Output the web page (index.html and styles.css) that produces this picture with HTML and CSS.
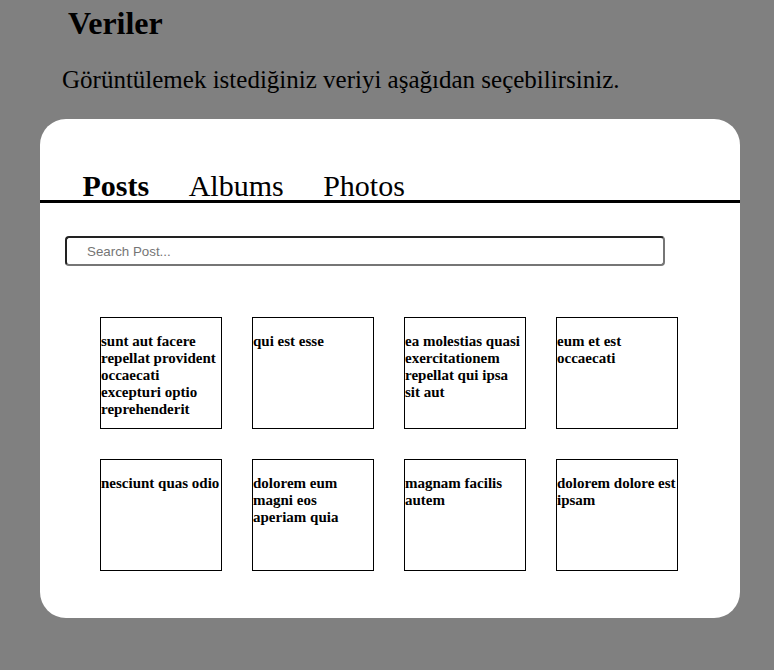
FILE: index.html
```html
<!DOCTYPE html>
<html lang="tr">
<head>
<meta charset="utf-8">
<title>Veriler</title>
<link rel="stylesheet" href="styles.css">
</head>
<body>
<header class="intro">
  <h1 class="title">Veriler</h1>
  <p class="lead">Görüntülemek istediğiniz veriyi aşağıdan seçebilirsiniz.</p>
</header>
<main class="panel">
  <nav class="tabs">
    <span class="tab active">Posts</span>
    <span class="tab">Albums</span>
    <span class="tab">Photos</span>
  </nav>
  <div class="search-wrap">
    <input class="search" type="text" placeholder="Search Post...">
  </div>
  <section class="grid">
    <div class="item"><h4 class="item-title">sunt aut facere repellat provident occaecati excepturi optio reprehenderit</h4></div>
    <div class="item"><h4 class="item-title">qui est esse</h4></div>
    <div class="item"><h4 class="item-title">ea molestias quasi exercitationem repellat qui ipsa sit aut</h4></div>
    <div class="item"><h4 class="item-title">eum et est occaecati</h4></div>
    <div class="item"><h4 class="item-title">nesciunt quas odio</h4></div>
    <div class="item"><h4 class="item-title">dolorem eum magni eos aperiam quia</h4></div>
    <div class="item"><h4 class="item-title">magnam facilis autem</h4></div>
    <div class="item"><h4 class="item-title">dolorem dolore est ipsam</h4></div>
  </section>
</main>
</body>
</html>
```

FILE: styles.css
```css
html, body {
  margin: 0;
  padding: 0;
}
body {
  background: #808080;
  font-family: "Liberation Serif", "Times New Roman", serif;
  color: #000;
  min-height: 670px;
}
.intro {
  padding-top: 5px;
}
.title {
  margin: 0 0 0 68px;
  font-size: 32px;
  font-weight: bold;
  line-height: 37px;
}
.lead {
  margin: 23px 0 0 62px;
  font-size: 25px;
  line-height: 29px;
}
.panel {
  margin: 25px 0 0 40px;
  width: 700px;
  height: 499px;
  box-sizing: border-box;
  background: #fff;
  border-radius: 26px;
  padding-top: 49px;
}
.tabs {
  display: flex;
  gap: 39.5px;
  padding-left: 42.5px;
  border-bottom: 3px solid #000;
  height: 32px;
  align-items: flex-end;
}
.tab {
  font-size: 30px;
  line-height: 28px;
}
.tab.active {
  font-weight: bold;
}
.search-wrap {
  padding: 33px 0 0 25px;
}
.search {
  display: block;
  width: 600px;
  height: 30px;
  box-sizing: border-box;
  border: 2px solid;
  border-color: #222 #767676 #767676 #222;
  border-radius: 4px;
  padding: 0 0 0 20px;
  font-family: "Liberation Sans", Arial, sans-serif;
  font-size: 13.33px;
  color: #000;
  outline: none;
}
.search::placeholder {
  color: #757575;
}
.grid {
  display: grid;
  grid-template-columns: repeat(4, 122px);
  gap: 30px;
  padding: 51px 0 0 60px;
}
.item {
  height: 112px;
  box-sizing: border-box;
  border: 1px solid #000;
}
.item-title {
  margin: 15px 0 0 0;
  font-size: 15px;
  font-weight: bold;
}
```
